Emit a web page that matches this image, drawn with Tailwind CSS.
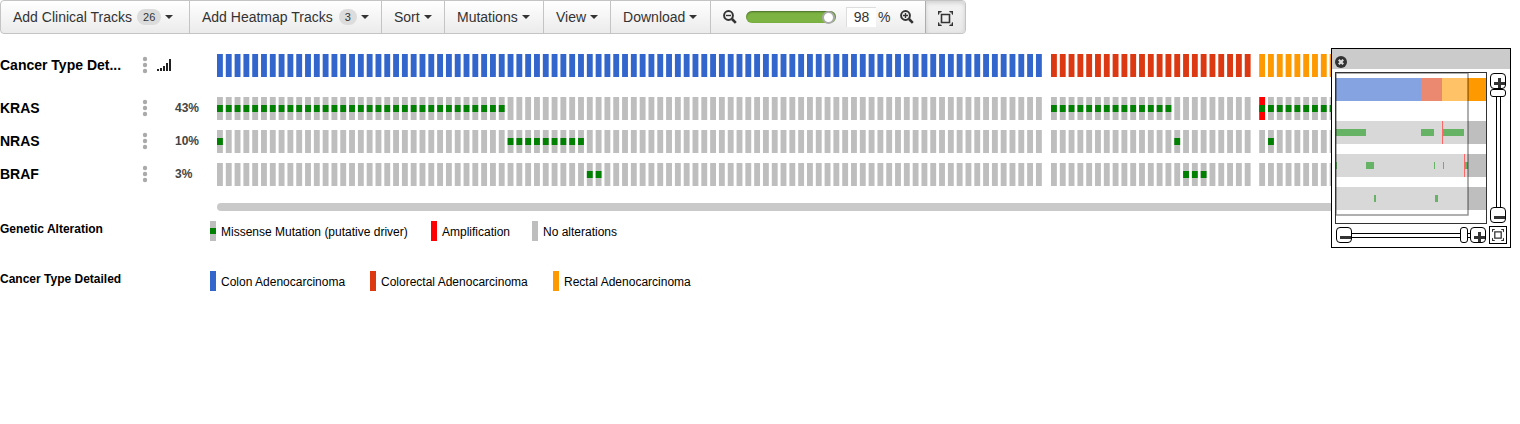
<!DOCTYPE html>
<html lang="en">
<head>
<meta charset="utf-8">
<title>OncoPrint</title>
<script src="https://cdn.jsdelivr.net/npm/@tailwindcss/browser@4"></script>
</head>
<body class="bg-white font-['Liberation_Sans',Arial,sans-serif] text-black">
<svg class="hidden">
  <symbol id="caret" viewBox="0 0 8 4"><path d="M0 0h8L4 4z" fill="#333"/></symbol>
  <symbol id="dots" viewBox="0 0 6 18"><g fill="#aaa"><circle cx="3" cy="3" r="2.2"/><circle cx="3" cy="9" r="2.2"/><circle cx="3" cy="15" r="2.2"/></g></symbol>
  <symbol id="fit" viewBox="0 0 15 15"><path d="M3.500 3.500h8v8h-8z" fill="none" stroke="#333" stroke-width="1.6"/><path d="M0 0h4L3 1.400H1.400V3L0 4zM11 0h4v4l-1.400-1V1.400H12zM15 11v4h-4l1-1.400h1.600V12zM4 15H0v-4l1.400 1v1.600H3z" fill="#333"/></symbol>
  <symbol id="lens" viewBox="0 0 14 14"><circle cx="5.5" cy="5.5" r="4.4" fill="none" stroke="#333" stroke-width="2"/><path d="M9 9l3.8 3.8" stroke="#333" stroke-width="2.6"/></symbol>
</svg>

<div class="relative min-h-screen overflow-hidden">
  <div role="toolbar" aria-label="OncoPrint controls" class="flex h-[34px] w-max rounded-sm border border-[#c4c4c4] bg-linear-to-b from-white to-[#ebebeb] text-sm text-[#333]">
    <button class="flex min-w-[189px] items-center border-r border-[#c4c4c4] px-3">Add Clinical Tracks <span class="mr-1 ml-[5px] rounded-full bg-[#dcdcdc] px-[6px] text-[11px] leading-4">26</span><svg class="h-1 w-2"><use href="#caret"/></svg></button>
    <button class="flex min-w-[192px] items-center border-r border-[#c4c4c4] px-3">Add Heatmap Tracks <span class="mr-1 ml-[6px] rounded-full bg-[#dcdcdc] px-[6px] text-[11px] leading-4">3</span><svg class="h-1 w-2"><use href="#caret"/></svg></button>
    <button class="flex min-w-[63px] items-center gap-1 border-r border-[#c4c4c4] px-3">Sort<svg class="h-1 w-2"><use href="#caret"/></svg></button>
    <button class="flex min-w-[99px] items-center gap-1 border-r border-[#c4c4c4] px-3">Mutations<svg class="h-1 w-2"><use href="#caret"/></svg></button>
    <button class="flex min-w-[67px] items-center gap-1 border-r border-[#c4c4c4] px-3">View<svg class="h-1 w-2"><use href="#caret"/></svg></button>
    <button class="flex min-w-[100px] items-center gap-1 border-r border-[#c4c4c4] px-3">Download<svg class="h-1 w-2"><use href="#caret"/></svg></button>
    <div class="flex items-center pr-[11px] pl-3">
      <button aria-label="Zoom out"><svg class="size-[14px]" viewBox="0 0 14 14"><use href="#lens"/><path d="M3 5.5h5" stroke="#333" stroke-width="1.4"/></svg></button>
      <input type="range" aria-label="Zoom" min="0" max="99" value="98" class="mr-[10px] ml-[9px] h-3 w-[90px] appearance-none rounded-full bg-[#7cb342] shadow-[inset_0_1px_2px_rgba(0,0,0,0.4)] [&::-webkit-slider-thumb]:size-[13px] [&::-webkit-slider-thumb]:appearance-none [&::-webkit-slider-thumb]:rounded-full [&::-webkit-slider-thumb]:border-2 [&::-webkit-slider-thumb]:border-[#aaa] [&::-webkit-slider-thumb]:bg-white">
      <input type="text" aria-label="Zoom percentage" value="98" class="h-5 w-[30px] border-t border-l border-[#ddd] bg-white pb-[2px] text-center leading-4">
      <span class="mr-[9px] ml-[2px]">%</span>
      <button aria-label="Zoom in"><svg class="size-[14px]" viewBox="0 0 14 14"><use href="#lens"/><path d="M3 5.5h5M5.5 3v5" stroke="#333" stroke-width="1.4"/></svg></button>
    </div>
    <button aria-label="Show minimap" class="flex w-10 items-center justify-center rounded-r-sm border-l border-[#adadad] bg-linear-to-b from-[#f4f4f4] to-[#e8e8e8] pt-[3px] shadow-[inset_0_2px_4px_rgba(0,0,0,0.15)]"><svg class="size-[15px]"><use href="#fit"/></svg></button>
  </div>

  <main class="flex pt-5">
    <div class="w-[217px] shrink-0 text-sm font-bold">
      <div class="mb-5 flex h-[23px] items-center pb-[2px]"><span class="w-[142px]">Cancer Type Det...</span><button aria-label="Cancer Type Detailed options" class="mr-[9px]"><svg class="h-[18px] w-[6px]"><use href="#dots"/></svg></button><svg class="h-3 w-[14px]" viewBox="0 0 14 12"><path d="M0 10h2v2H0zM3 9h2v3H3zM6 7h2v5H6zM9 4h2v8H9zM12 0h2v12h-2z" fill="#222"/></svg></div>
      <div class="mb-[10px] flex h-[23px] items-center pb-[2px]"><span class="w-[142px]">KRAS</span><button aria-label="KRAS options" class="mr-[27px]"><svg class="h-[18px] w-[6px]"><use href="#dots"/></svg></button><span class="text-xs text-[#444]">43%</span></div>
      <div class="mb-[10px] flex h-[23px] items-center pb-[2px]"><span class="w-[142px]">NRAS</span><button aria-label="NRAS options" class="mr-[27px]"><svg class="h-[18px] w-[6px]"><use href="#dots"/></svg></button><span class="text-xs text-[#444]">10%</span></div>
      <div class="flex h-[23px] items-center pb-[2px]"><span class="w-[142px]">BRAF</span><button aria-label="BRAF options" class="mr-[27px]"><svg class="h-[18px] w-[6px]"><use href="#dots"/></svg></button><span class="text-xs text-[#444]">3%</span></div>
    </div>
    <div class="mr-[188px] min-w-0 grow overflow-hidden">
      <svg id="grid" class="block h-[132px] w-full"></svg>
      <div class="mt-[17px] h-2 rounded-l-full bg-[#c9c9c9]"></div>
    </div>
  </main>

  <section class="grid grid-cols-[210px_1fr] gap-y-[30px] pt-[10px] text-xs">
    <h2 class="font-bold">Genetic Alteration</h2>
    <ul class="flex h-5 items-center gap-5">
      <li class="flex min-w-[201px] items-center gap-[5px]"><span class="flex h-5 w-[6px] items-center bg-[#bebebe]"><span class="h-[6px] w-full bg-[#008000]"></span></span><span class="pt-[2px]">Missense Mutation (putative driver)</span></li>
      <li class="flex min-w-[81px] items-center gap-[5px]"><span class="h-5 w-[6px] bg-[#ff0000]"></span><span class="pt-[2px]">Amplification</span></li>
      <li class="flex items-center gap-[5px]"><span class="h-5 w-[6px] bg-[#bebebe]"></span><span class="pt-[2px]">No alterations</span></li>
    </ul>
    <h2 class="font-bold">Cancer Type Detailed</h2>
    <ul class="flex h-5 items-center gap-5">
      <li class="flex min-w-[140px] items-center gap-[5px]"><span class="h-5 w-[6px] bg-[#3366cc]"></span><span class="pt-[2px]">Colon Adenocarcinoma</span></li>
      <li class="flex min-w-[163px] items-center gap-[5px]"><span class="h-5 w-[6px] bg-[#dc3912]"></span><span class="pt-[2px]">Colorectal Adenocarcinoma</span></li>
      <li class="flex items-center gap-[5px]"><span class="h-5 w-[6px] bg-[#ff9900]"></span><span class="pt-[2px]">Rectal Adenocarcinoma</span></li>
    </ul>
  </section>

  <aside aria-label="Minimap" class="absolute top-12 right-[9px] w-[180px] border border-black bg-white pb-[3px]">
    <div class="flex h-5 items-end bg-[#cbcbcb] pb-px pl-[3px]"><button aria-label="Close minimap"><svg class="block size-3" viewBox="0 0 12 12"><circle cx="6" cy="6" r="6" fill="#333"/><path d="M3.8 3.8l4.400 4.400M8.200 3.8L3.8 8.200" stroke="#ddd" stroke-width="2.2"/></svg></button></div>
    <div class="grid grid-cols-[152px_18px] gap-x-[2px] gap-y-[2px] pt-[3px] pl-[3px]">
      <svg class="block size-[152px]" viewBox="0 0 152 152" shape-rendering="crispEdges">
        <path d="M1 6h85v23H1z" fill="#3366cc"/><path d="M86 6h21v23H86z" fill="#dc3912"/><path d="M107 6h44v23h-44z" fill="#ff9900"/>
        <path d="M1 49h150v23H1zM1 82h150v23H1zM1 115h150v23H1z" fill="#bebebe"/>
        <path d="M1 57h30v7H1zM86 57h13v7H86zM107 57h22v7h-22zM1 90h1v7H1zM31 90h8v7h-8zM99 90h1v7h-1zM108 90h1v7h-1zM130 90h3v7h-3zM39 123h2v7h-2zM100 123h3v7h-3z" fill="#008000"/>
        <path d="M107 49h1v23h-1zM129 82h1v23h-1z" fill="#f00"/>
        <rect x="1" y="1" width="132" height="142" fill="#fff" fill-opacity=".4"/>
        <rect x="1" y="1" width="132" height="142" fill="none" stroke="#000" stroke-opacity=".45" stroke-width="1.4" shape-rendering="auto"/>
        <rect x=".5" y=".5" width="151" height="151" fill="none" stroke="#333"/>
      </svg>
      <div class="flex flex-col items-center pt-px pb-px">
        <button aria-label="Zoom in vertically" class="size-4 shrink-0 rounded-[4px] border border-black bg-white"><svg class="block size-[14px]" viewBox="0 0 14 14"><path d="M3 8h11v3H3zM7 4h3v10H7z" fill="#333"/></svg></button>
        <div role="slider" aria-label="Vertical zoom" aria-valuenow="100" tabindex="0" class="h-2 w-4 shrink-0 rounded-[3px] border border-black bg-white"></div>
        <div class="w-[5px] grow border-x border-black"></div>
        <button aria-label="Zoom out vertically" class="size-4 shrink-0 rounded-[4px] border border-black bg-white"><svg class="block size-[14px]" viewBox="0 0 14 14"><path d="M3 8h11v3H3z" fill="#333"/></svg></button>
      </div>
      <div class="flex items-center px-px">
        <button aria-label="Zoom out horizontally" class="size-4 shrink-0 rounded-[4px] border border-black bg-white"><svg class="block size-[14px]" viewBox="0 0 14 14"><path d="M3 8h11v3H3z" fill="#333"/></svg></button>
        <div class="h-[5px] grow border-y border-black"></div>
        <div role="slider" aria-label="Horizontal zoom" aria-valuenow="98" tabindex="0" class="h-4 w-2 shrink-0 rounded-[3px] border border-black bg-white"></div>
        <div class="h-[5px] w-[2px] border-y border-black"></div>
        <button aria-label="Zoom in horizontally" class="size-4 shrink-0 rounded-[4px] border border-black bg-white"><svg class="block size-[14px]" viewBox="0 0 14 14"><path d="M3 8h11v3H3zM7 4h3v10H7z" fill="#333"/></svg></button>
      </div>
      <button aria-label="Fit to window" class="flex size-[18px] items-center justify-center border border-black bg-white"><svg class="size-3" viewBox="0 0 15 15"><use href="#fit" width="15" height="15"/></svg></button>
    </div>
  </aside>
</div>

<script>
  const PITCH = 8.806, WIDTH = 5.87;
  const range = (a, b) => Array.from({ length: b - a + 1 }, (_, i) => a + i);
  // Sample groups by cancer type, with mutated sample indices per gene row
  const groups = [
    { x: 0, n: 94, color: '#3366cc', mut: [range(0, 32), [0, ...range(33, 41)], [42, 43]], amp: [] },
    { x: 834, n: 23, color: '#dc3912', mut: [range(0, 13), [14], [15, 16, 17]], amp: [] },
    { x: 1042.2, n: 30, color: '#ff9900', mut: [range(0, 24), [1], []], amp: [0] },
  ];
  let out = '';
  const rect = (x, y, h, c) => { out += `<rect x="${x.toFixed(2)}" y="${y}" width="${WIDTH}" height="${h}" fill="${c}"/>`; };
  for (const g of groups) for (let i = 0; i < g.n; i++) {
    const x = g.x + i * PITCH;
    rect(x, 0, 23, g.color);
    [43, 76, 109].forEach((y, r) => {
      rect(x, y, 23, r === 0 && g.amp.includes(i) ? '#ff0000' : '#bebebe');
      if (g.mut[r].includes(i)) rect(x, y + 8, 7, '#008000');
    });
  }
  document.getElementById('grid').innerHTML = out;
</script>
</body>
</html>
